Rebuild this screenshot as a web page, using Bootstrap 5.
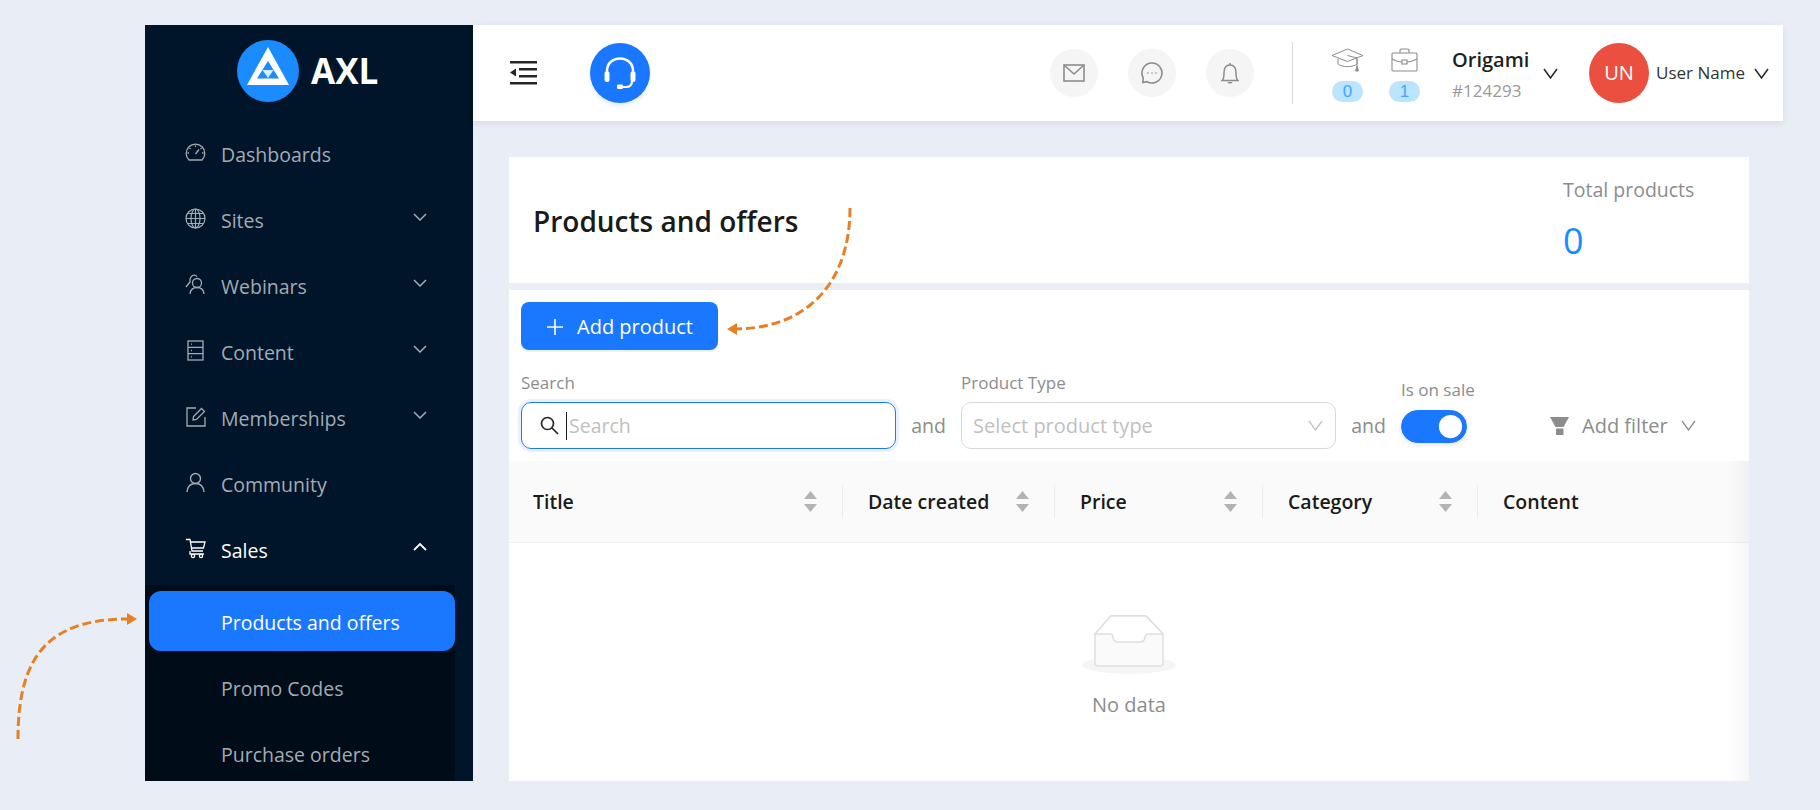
<!DOCTYPE html>
<html lang="en">

<head>
    <meta charset="UTF-8">
    <meta name="viewport" content="width=device-width, initial-scale=1.0">
    <title>Products and offers</title>
    <link href="https://cdn.jsdelivr.net/npm/bootstrap@5.3.0/dist/css/bootstrap.min.css" rel="stylesheet">
    <style>
        body { background: #e9eef6; font-family: "Open Sans", "Noto Sans", sans-serif; font-size: 19.5px; height: 810px; overflow: hidden; position: relative; }
        svg { display: block; flex: none; }
        .app-frame { margin: 25px 0 0 145px; width: 1638px; height: 756px; }

        /* sidebar */
        .side-bar { width: 328px; background: #001529; overflow: hidden; flex: none; }
        .side-logo { height: 96px; padding: 0 0 4px 92px; gap: 12px; color: #fff; font-size: 35px; font-weight: 700; }
        .side-item { height: 66px; padding: 2px 46px 0 40px; gap: 15px; color: #a3abb3; text-decoration: none; }
        .side-item.is-open { color: #fff; }
        .side-item .ic { width: 21px; margin-top: -5px; }
        .side-chev { margin-left: auto; margin-top: -8px; }
        .side-sub { background: #000c17; width: 310px; margin-top: 2px; padding-top: 6px; }
        .sub-item { height: 66px; padding: 4px 0 0 76px; color: #a3abb3; text-decoration: none; }
        .sub-item.is-active { height: 60px; margin: 0 0 3px 4px; padding-left: 72px; color: #fff; background: #1a77ff; border-radius: 12px; }

        /* top bar */
        .top-bar { height: 96px; background: #fff; box-shadow: 0 2px 8px rgba(0, 0, 0, .08); padding: 0 14px 0 37px; position: relative; }
        .head-circle { width: 60px; height: 60px; background: #1a77ff; box-shadow: 0 3px 4px rgba(26, 119, 255, .12); margin-left: 52px; }
        .grey-circle { width: 48px; height: 48px; background: #f5f5f5; }
        .grey-circle + .grey-circle { margin-left: 30px; }
        .top-sep { width: 1px; height: 62px; background: #d9d9d9; margin: 0 39px 0 38px; }
        .stat-wrap { gap: 26px; margin: 4px 32px 0 0; }
        .stat-col { width: 31px; gap: 9px; }
        .stat-pill { width: 31px; height: 21px; line-height: 21px; border-radius: 11px; background: #bae4ff; color: #40a9ff; font-size: 17px; text-align: center; font-family: "Liberation Sans", sans-serif; }
        .org-box { width: 91px; margin-top: 5px; }
        .org-name { font-size: 20px; font-weight: 600; color: #1f1f1f; line-height: 28px; margin-bottom: 3px; white-space: nowrap; }
        .org-id { font-size: 17px; color: #999; line-height: 28px; }
        .user-dot { width: 60px; height: 60px; background: #eb4f3f; color: #fff; font-size: 20px; margin-left: 31px; }
        .user-name { font-size: 17px; color: #333; margin: 0 9px 0 7px; white-space: nowrap; }

        /* content */
        .main-wrap { padding: 36px 34px 0 36px; overflow: hidden; flex: 1; }
        .title-card { height: 126px; background: #fff; padding: 0 24px; margin-bottom: 7px; }
        .title-card h1 { font-size: 28px; font-weight: 600; color: #1a1a1a; margin: 3px 0 0; }
        .total-box { width: 162px; }
        .total-lbl { color: #8c8c8c; font-size: 19.5px; line-height: 28px; margin-bottom: 13px; white-space: nowrap; }
        .total-num { color: #1a8cff; font-size: 36px; line-height: 48px; }
        .list-card { background: #fff; padding-top: 12px; overflow: hidden; height: 491px; }
        .add-btn { height: 48px; width: 197px; margin-left: 12px; padding-top: 8px; border-radius: 8px; background: #1a77ff; border: 0; color: #fff; font-size: 20px; gap: 13px; box-shadow: 0 2px 0 rgba(5, 145, 255, .1); }
        .filter-row { padding: 0 12px; margin-top: 22px; height: 89px; }
        .field-lbl { color: #8c8c8c; font-size: 17px; line-height: 22px; margin-bottom: 8px; white-space: nowrap; }
        .search-box { width: 375px; height: 47px; border: 1px solid #1a77ff; border-radius: 10px; box-shadow: 0 0 0 3px rgba(26, 119, 255, .1); padding: 0 18px; gap: 7px; }
        .search-box input { border: 0; outline: 0; padding: 0; margin-left: -5px; font-size: 19.5px; width: 100%; color: #333; }
        .search-box input::placeholder { color: #bfbfbf; opacity: 1; }
        .fake-caret { width: 1px; height: 28px; background: #1a1a1a; flex: none; }
        .type-box { width: 375px; height: 47px; border: 1px solid #d9d9d9; border-radius: 10px; padding: 0 12px 0 11px; color: #bfbfbf; font-size: 20px; }
        .and-slot { padding-top: 30px; }
        .and-word { color: #8c8c8c; font-size: 19.5px; width: 65px; text-align: center; height: 47px; line-height: 47px; flex: none; }
        .sale-col { width: 149px; padding-top: 7px; }
        .sale-col .field-lbl { margin-bottom: 9px; }
        .sale-col .form-check-input { width: 66px; height: 33px; margin: 0; background-color: #1a77ff; border-color: #1a77ff; float: none; box-shadow: 0 2px 4px rgba(0, 0, 0, .1); }
        .sale-col .form-switch { padding: 0; margin: 0; min-height: 0; display: block; height: 33px; }
        .filter-add { color: #8c8c8c; font-size: 20px; height: 47px; gap: 13px; white-space: nowrap; }

        .prod-table { table-layout: fixed; width: 100%; margin: 0; }
        .prod-table th { height: 81px; background: #fafafa; font-size: 19.5px; font-weight: 600; color: #1a1a1a; padding: 0 26px 0 25px; border-bottom: 1px solid #f0f0f0; vertical-align: middle; position: relative; white-space: nowrap; }
        .prod-table th:first-child { padding-left: 24px; }
        .prod-table th:not(:last-child)::after { content: ""; position: absolute; right: 0; top: 24px; height: 33px; width: 1px; background: #ececec; }
        .col-a { width: 334px; } .col-b { width: 212px; } .col-c { width: 208px; } .col-d { width: 215px; }
        .table-wrap { position: relative; }
        .right-shade { position: absolute; top: 0; right: 0; bottom: 0; width: 22px; background: linear-gradient(to right, rgba(0, 0, 0, 0), rgba(0, 0, 0, .035)); }
        .empty-box { height: 250px; padding-top: 72px; color: #8c8c8c; font-size: 20px; gap: 15px; }

        .arrow-layer { position: absolute; left: 0; top: 0; pointer-events: none; }
    </style>
</head>

<body>
    <div class="app-frame d-flex">
        <!-- sidebar -->
        <aside class="side-bar">
            <div class="side-logo d-flex align-items-center">
                <svg width="62" height="62" viewBox="0 0 62 62"><circle cx="31" cy="31" r="31" fill="#1a8cff"/><path d="M31 7 L52 45 H10 Z M31 21 L20 38.500 H42 Z" fill="#fff" fill-rule="evenodd"/><path d="M25.500 30 H36.500 L31 38 Z" fill="#d6ecff"/></svg>
                <span>AXL</span>
            </div>
            <nav class="d-flex flex-column">
                <a class="side-item d-flex align-items-center" href="#"><span class="ic"><svg width="21" height="21" viewBox="0 0 21 21" fill="none" stroke="#a3abb3" stroke-width="1.3"><path d="M4 18 A9.3 9.3 0 1 1 17 18 Z"/><path d="M10.5 12 L14 7.5"/><path d="M10.5 3.5 v1.5 M4.5 6 l1 1 M16.5 6 l-1 1 M2.5 11 h1.5 M17 11 h1.5"/></svg></span>Dashboards</a>
                <a class="side-item d-flex align-items-center" href="#"><span class="ic"><svg width="21" height="21" viewBox="0 0 21 21" fill="none" stroke="#a3abb3" stroke-width="1.2"><circle cx="10.5" cy="10.5" r="9.5"/><ellipse cx="10.5" cy="10.5" rx="4.5" ry="9.5"/><path d="M10.5 1 V20 M1 10.5 H20 M2.5 5.5 H18.5 M2.5 15.5 H18.5"/></svg></span>Sites<svg class="side-chev" width="14" height="8" viewBox="0 0 14 8" fill="none" stroke="#a3abb3" stroke-width="1.5"><path d="M1 1 L7 7 L13 1"/></svg></a>
                <a class="side-item d-flex align-items-center" href="#"><span class="ic"><svg width="21" height="21" viewBox="0 0 21 21" fill="none" stroke="#a3abb3" stroke-width="1.3"><circle cx="12" cy="9" r="4.5"/><path d="M5 20 C5.5 15.5 8 13.5 12 13.5 C16 13.5 18.5 15.5 19 20"/><path d="M1 13 L5 8 C4.5 4 6.5 1.500 9 1.200 C10 1.100 11 1.500 12 2.500"/></svg></span>Webinars<svg class="side-chev" width="14" height="8" viewBox="0 0 14 8" fill="none" stroke="#a3abb3" stroke-width="1.5"><path d="M1 1 L7 7 L13 1"/></svg></a>
                <a class="side-item d-flex align-items-center" href="#"><span class="ic"><svg width="21" height="21" viewBox="0 0 21 21" fill="none" stroke="#a3abb3" stroke-width="1.3"><rect x="3" y="1" width="15" height="19"/><path d="M3 7.300 H18 M3 13.700 H18"/><path d="M6 4.200 h1 M6 10.500 h1 M6 16.800 h1"/></svg></span>Content<svg class="side-chev" width="14" height="8" viewBox="0 0 14 8" fill="none" stroke="#a3abb3" stroke-width="1.5"><path d="M1 1 L7 7 L13 1"/></svg></a>
                <a class="side-item d-flex align-items-center" href="#"><span class="ic"><svg width="21" height="21" viewBox="0 0 21 21" fill="none" stroke="#a3abb3" stroke-width="1.3"><path d="M11 2 H2 V20 H20 V11"/><path d="M8 14 L8.500 10.500 L16.500 2.500 L19.500 5.500 L11.500 13.500 Z"/></svg></span>Memberships<svg class="side-chev" width="14" height="8" viewBox="0 0 14 8" fill="none" stroke="#a3abb3" stroke-width="1.5"><path d="M1 1 L7 7 L13 1"/></svg></a>
                <a class="side-item d-flex align-items-center" href="#"><span class="ic"><svg width="21" height="21" viewBox="0 0 21 21" fill="none" stroke="#a3abb3" stroke-width="1.4"><circle cx="10.500" cy="6.500" r="5"/><path d="M2 20 C2.500 14.500 6 11.500 10.500 11.500 C15 11.500 18.500 14.500 19 20"/></svg></span>Community</a>
                <a class="side-item is-open d-flex align-items-center" href="#"><span class="ic"><svg width="21" height="21" viewBox="0 0 21 21" fill="none" stroke="#fff" stroke-width="1.3"><path d="M1 1.500 H5 L7 13 H18"/><path d="M5.500 4 H20 L18.500 10 H6.500"/><path d="M5 13 V16 H19"/><circle cx="8" cy="18" r="1.600"/><circle cx="16" cy="18" r="1.600"/></svg></span>Sales<svg class="side-chev" width="14" height="8" viewBox="0 0 14 8" fill="none" stroke="#fff" stroke-width="1.800"><path d="M1 7 L7 1 L13 7"/></svg></a>
                <div class="side-sub d-flex flex-column">
                    <a class="sub-item is-active d-flex align-items-center" href="#">Products and offers</a>
                    <a class="sub-item d-flex align-items-center" href="#">Promo Codes</a>
                    <a class="sub-item d-flex align-items-center" href="#">Purchase orders</a>
                </div>
            </nav>
        </aside>

        <div class="flex-grow-1 d-flex flex-column">
            <!-- top bar -->
            <header class="top-bar d-flex align-items-center">
                <svg width="28" height="24" viewBox="0 0 28 24" fill="#262626"><rect x="0" y="0" width="27" height="2.500"/><rect x="9" y="7" width="18" height="2.500"/><rect x="9" y="14" width="18" height="2.500"/><rect x="0" y="21" width="27" height="2.500"/><path d="M0 11.500 L6 7.500 V15.500 Z"/></svg>
                <div class="head-circle rounded-circle d-flex align-items-center justify-content-center">
                    <svg width="32" height="33" viewBox="0 0 32 33" fill="none" stroke="#fff"><path d="M3 14 C3 6 9 1.500 16 1.500 C23 1.500 29 6 29 14" stroke-width="2.500"/><rect x="0.500" y="14" width="5" height="11" rx="2.500" fill="#fff" stroke="none"/><rect x="26.500" y="14" width="5" height="11" rx="2.500" fill="#fff" stroke="none"/><path d="M28 24 C28 28.500 26 30 22 30 H16" stroke-width="2.200"/><rect x="13" y="27.500" width="6" height="4.500" rx="1" fill="#fff" stroke="none"/></svg>
                </div>
                <div class="d-flex align-items-center ms-auto">
                    <div class="d-flex align-items-center">
                        <div class="grey-circle rounded-circle d-flex align-items-center justify-content-center">
                            <svg width="22" height="18" viewBox="0 0 22 18" fill="none" stroke="#8c8c8c" stroke-width="1.600"><rect x="1" y="1" width="20" height="16"/><path d="M1 1 L11 10 L21 1"/></svg>
                        </div>
                        <div class="grey-circle rounded-circle d-flex align-items-center justify-content-center">
                            <svg width="22" height="22" viewBox="0 0 22 22" fill="none" stroke="#8c8c8c" stroke-width="1.600"><path d="M11 1 A10 10 0 1 1 6 19.700 L1.800 20.500 L2.200 15.800 A10 10 0 0 1 11 1 Z"/><circle cx="7" cy="11" r=".8" fill="#8c8c8c" stroke="none"/><circle cx="11" cy="11" r=".8" fill="#8c8c8c" stroke="none"/><circle cx="15" cy="11" r=".8" fill="#8c8c8c" stroke="none"/></svg>
                        </div>
                        <div class="grey-circle rounded-circle d-flex align-items-center justify-content-center">
                            <svg width="18" height="22" viewBox="0 0 18 22" fill="none" stroke="#8c8c8c" stroke-width="1.500"><path d="M1 18.500 C3 17 3 15 3 11 C3 6 5 3 9 3 C13 3 15 6 15 11 C15 15 15 17 17 18.500 Z"/><path d="M9 1 V3 M7 20 C7.500 21 10.500 21 11 20"/></svg>
                        </div>
                    </div>
                    <div class="top-sep"></div>
                    <div class="stat-wrap d-flex">
                        <div class="stat-col d-flex flex-column align-items-center">
                            <svg width="33" height="24" viewBox="0 0 33 24" fill="none" stroke="#8c8c8c" stroke-width="1"><path d="M1 7.500 L16.500 1 L32 7.500 L16.500 13.500 Z"/><path d="M7 10.500 V16 C11 19.500 22 19.500 26 16 V10.500"/><path d="M16.500 7.500 L26 10 V18"/><path d="M24.500 23 L26 18 L27.500 23 Z" fill="#8c8c8c"/></svg>
                            <span class="stat-pill">0</span>
                        </div>
                        <div class="stat-col d-flex flex-column align-items-center">
                            <svg width="27" height="24" viewBox="0 0 27 24" fill="none" stroke="#8c8c8c" stroke-width="1.100"><rect x="1" y="5" width="25" height="18" rx="1"/><path d="M9 5 V2 C9 1 10 1 10.500 1 H16.500 C17 1 18 1 18 2 V5"/><path d="M1 11 C7 14 10 14 11 14 M16 14 C17 14 20 14 26 11"/><rect x="11" y="12" width="5" height="4"/></svg>
                            <span class="stat-pill">1</span>
                        </div>
                    </div>
                    <div class="org-box">
                        <div class="org-name">Origami</div>
                        <div class="org-id">#124293</div>
                    </div>
                    <svg width="15" height="11" viewBox="0 0 15 11" fill="none" stroke="#262626" stroke-width="1.500"><path d="M1 1 L7.500 10 L14 1"/></svg>
                    <div class="user-dot rounded-circle d-flex align-items-center justify-content-center">UN</div>
                    <span class="user-name">User Name</span>
                    <svg width="15" height="11" viewBox="0 0 15 11" fill="none" stroke="#262626" stroke-width="1.500"><path d="M1 1 L7.500 10 L14 1"/></svg>
                </div>
            </header>

            <main class="main-wrap d-flex flex-column">
                <div class="title-card d-flex align-items-center justify-content-between flex-shrink-0">
                    <h1>Products and offers</h1>
                    <div class="total-box">
                        <div class="total-lbl">Total products</div>
                        <div class="total-num">0</div>
                    </div>
                </div>

                <div class="list-card">
                    <button type="button" class="btn add-btn d-flex align-items-center justify-content-center">
                        <svg width="18" height="18" viewBox="0 0 18 18" stroke="#fff" stroke-width="1.600"><path d="M9 1 V17 M1 9 H17"/></svg>
                        Add product
                    </button>

                    <div class="filter-row d-flex align-items-start">
                        <div>
                            <div class="field-lbl">Search</div>
                            <div class="search-box d-flex align-items-center">
                                <svg width="19" height="19" viewBox="0 0 19 19" fill="none" stroke="#262626" stroke-width="1.700"><circle cx="7.500" cy="7.500" r="6"/><path d="M12 12 L18 18"/></svg>
                                <span class="fake-caret"></span>
                                <input type="text" placeholder="Search">
                            </div>
                        </div>
                        <div class="and-slot"><div class="and-word">and</div></div>
                        <div>
                            <div class="field-lbl">Product Type</div>
                            <div class="type-box d-flex align-items-center justify-content-between">
                                <span>Select product type</span>
                                <svg width="15" height="11" viewBox="0 0 15 11" fill="none" stroke="#c4c4c4" stroke-width="1.300"><path d="M1 1 L7.500 10 L14 1"/></svg>
                            </div>
                        </div>
                        <div class="and-slot"><div class="and-word">and</div></div>
                        <div class="sale-col">
                            <div class="field-lbl">Is on sale</div>
                            <div class="form-check form-switch">
                                <input class="form-check-input" type="checkbox" role="switch" checked>
                            </div>
                        </div>
                        <div class="and-slot">
                            <div class="filter-add d-flex align-items-center">
                                <svg width="19" height="18" viewBox="0 0 19 18" fill="#8c8c8c"><path d="M0 0 H19 L13.500 10 H5.500 Z"/><rect x="6" y="11.500" width="7.500" height="6.500"/></svg>
                                <span>Add filter</span>
                                <svg width="15" height="11" viewBox="0 0 15 11" fill="none" stroke="#8c8c8c" stroke-width="1.300"><path d="M1 1 L7.500 10 L14 1"/></svg>
                            </div>
                        </div>
                    </div>

                    <div class="table-wrap">
                        <table class="table prod-table">
                            <colgroup><col class="col-a"><col class="col-b"><col class="col-c"><col class="col-d"><col></colgroup>
                            <thead>
                                <tr id="headRow"></tr>
                            </thead>
                        </table>
                        <div class="empty-box d-flex flex-column align-items-center">
                            <svg width="94" height="60" viewBox="0 0 94 60"><ellipse cx="47" cy="50" rx="47" ry="9" fill="#f5f5f5"/><path d="M13 19 L29 1 H64 L81 19 V48 Q81 51 78 51 H16 Q13 51 13 48 Z" fill="#fafafa" stroke="#e0e0e0" stroke-width="1.500"/><path d="M13 19 L29 1 H64 L81 19 H66 Q63 19 63 23 Q62 27 58 27 H36 Q32 27 31 23 Q31 19 28 19 Z" fill="#fff" stroke="#e0e0e0" stroke-width="1.500"/></svg>
                            <span>No data</span>
                        </div>
                        <div class="right-shade"></div>
                    </div>
                </div>
            </main>
        </div>
    </div>

    <!-- flechas de anotacion -->
    <svg class="arrow-layer" width="1820" height="810" viewBox="0 0 1820 810" fill="none">
        <path d="M18 739 C18 660 45 619 128 619" stroke="#e87f24" stroke-width="3" stroke-dasharray="9 4"/>
        <path d="M137 619 L127 613 V625 Z" fill="#e87f24"/>
        <path d="M850 208 C850 280 810 328 736 329" stroke="#e87f24" stroke-width="3" stroke-dasharray="9 4"/>
        <path d="M727 329 L737 323 V335 Z" fill="#e87f24"/>
    </svg>

    <script>
        // cabecera de la tabla
        const sortIcon = '<svg width="13" height="21" viewBox="0 0 13 21" fill="#b3b3b3"><path d="M6.5 0 L13 8 H0 Z M6.5 21 L0 13 H13 Z"/></svg>';
        const headers = ["Title", "Date created", "Price", "Category", "Content"];
        document.getElementById("headRow").innerHTML = headers.map(h =>
            `<th><div class="d-flex align-items-center justify-content-between"><span>${h}</span>${h === "Content" ? "" : sortIcon}</div></th>`
        ).join("");
    </script>
    <script src="https://cdn.jsdelivr.net/npm/bootstrap@5.3.0/dist/js/bootstrap.bundle.min.js"></script>
</body>

</html>
